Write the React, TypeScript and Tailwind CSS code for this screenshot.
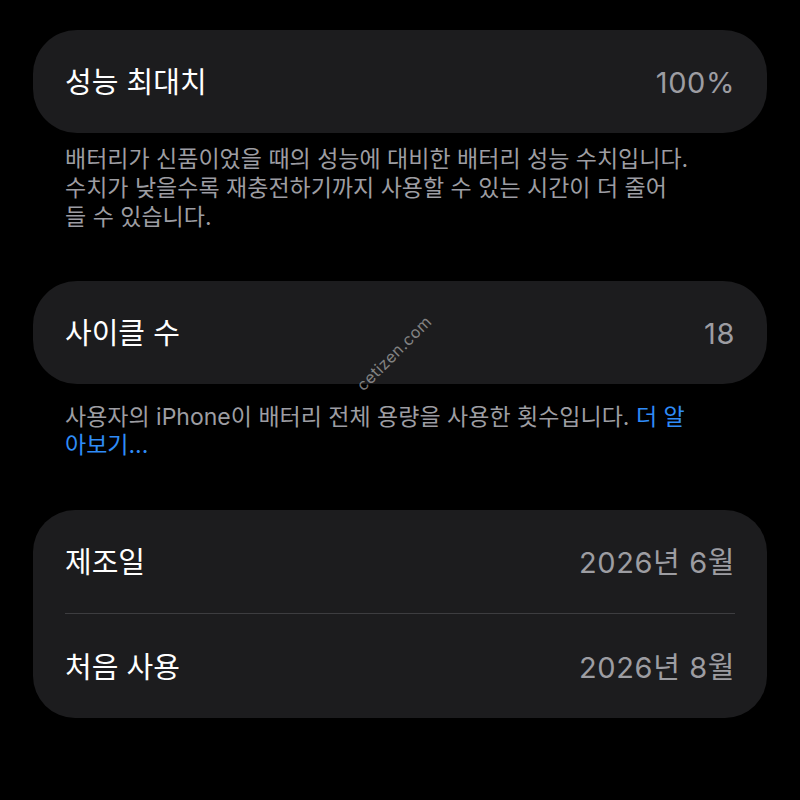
import React from "react";

const font = { fontFamily: 'Inter, "Noto Sans CJK KR", sans-serif' };

function Row({ label, value, h = "h-[103px]" }: { label: string; value: string; h?: string }) {
  return (
    <div className={`flex ${h} items-center justify-between px-[32px] pt-[3px]`}>
      <span className="text-[29px] text-white tracking-[0px]">{label}</span>
      <span className="text-[29px] text-[#9d9da2] tracking-[0.6px]">{value}</span>
    </div>
  );
}

export default function App() {
  return (
    <div className="relative w-[800px] h-[800px] bg-black px-[33px] pt-[30px] overflow-hidden" style={font}>
      <div className="rounded-[44px] bg-[#1c1c1e]">
        <Row label="성능 최대치" value="100%" />
      </div>
      <p className="mt-[12px] px-[32px] text-[23px] leading-[29px] text-[#9d9da2] tracking-[0px]">
        배터리가 신품이었을 때의 성능에 대비한 배터리 성능 수치입니다.
        <br />
        수치가 낮을수록 재충전하기까지 사용할 수 있는 시간이 더 줄어
        <br />
        들 수 있습니다.
      </p>
      <div className="mt-[49px] rounded-[44px] bg-[#1c1c1e]">
        <Row label="사이클 수" value="18" />
      </div>
      <p className="mt-[19px] px-[32px] text-[23px] leading-[28px] text-[#9d9da2] tracking-[0px]">
        사용자의 iPhone이 배터리 전체 용량을 사용한 횟수입니다.{" "}
        <span className="text-[#2f8cf7]">더 알</span>
        <br />
        <span className="text-[#2f8cf7]">아보기...</span>
      </p>
      <div className="mt-[51px] rounded-[42px] bg-[#1c1c1e]">
        <Row label="제조일" value="2026년 6월" />
        <div className="mx-[32px] h-px bg-[#3d3d40]" />
        <Row label="처음 사용" value="2026년 8월" h="h-[104px]" />
      </div>
      <div className="absolute left-[345px] top-[341px] rotate-[-45deg] text-[16px] text-[#c8c8c8]/60 tracking-[0.5px]">
        cetizen.com
      </div>
    </div>
  );
}
